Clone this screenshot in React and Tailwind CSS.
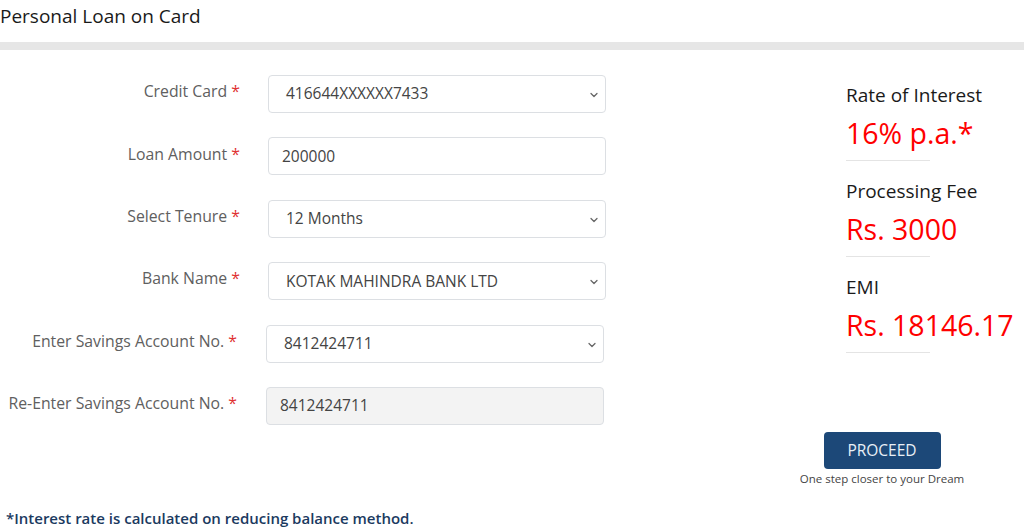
import { ChevronDown } from 'lucide-react';

const font = { fontFamily: '"Open Sans", "Noto Sans", Arial, sans-serif' };

function Label({ text }) {
  return (
    <label className="text-[15.8px] text-[#606060] whitespace-nowrap">
      {text} <span className="text-[#e03131]">*</span>
    </label>
  );
}

function SelectBox({ value }) {
  return (
    <div className="relative h-[38px] w-[338px] rounded-[4px] border border-[#dcdfe3] bg-white flex items-center pl-[17px] text-[15.5px] text-[#444]">
      <span>{value}</span>
      <ChevronDown className="absolute right-[5px] top-[13px] text-[#666]" size={12} strokeWidth={2.5} />
    </div>
  );
}

function InputBox({ value, disabled }) {
  return (
    <div
      className={`h-[38px] w-[338px] rounded-[4px] border border-[#dcdfe3] flex items-center pl-[13px] text-[15.5px] text-[#444] ${
        disabled ? 'bg-[#f3f3f3]' : 'bg-white'
      }`}
    >
      {value}
    </div>
  );
}

const rows = [
  { label: 'Credit Card', value: '416644XXXXXX7433', type: 'select', shift: false },
  { label: 'Loan Amount', value: '200000', type: 'input', shift: false },
  { label: 'Select Tenure', value: '12 Months', type: 'select', shift: false },
  { label: 'Bank Name', value: 'KOTAK MAHINDRA BANK LTD', type: 'select', shift: false },
  { label: 'Enter Savings Account No.', value: '8412424711', type: 'select', shift: true },
  { label: 'Re-Enter Savings Account No.', value: '8412424711', type: 'disabled', shift: true },
];

const stats = [
  { label: 'Rate of Interest', value: '16% p.a.*' },
  { label: 'Processing Fee', value: 'Rs. 3000' },
  { label: 'EMI', value: 'Rs. 18146.17' },
];

export default function App() {
  return (
    <div className="w-[1024px] h-[528px] bg-white overflow-hidden" style={font}>
      <div className="h-[42px] flex items-start pt-[1px]">
        <h1 className="text-[19px] leading-[30px] text-[#1a1a1a]">Personal Loan on Card</h1>
      </div>
      <div className="h-[8px] bg-[#e6e6e6]" />

      <div className="flex">
        <div className="w-[782px] pt-[25px] flex flex-col gap-[24.4px]">
          {rows.map((row) => (
            <div key={row.label} className="flex items-center h-[38px]">
              <div
                className={`flex justify-end pb-[4px] ${
                  row.shift ? 'w-[237px] mr-[29px]' : 'w-[240px] mr-[28px]'
                }`}
              >
                <Label text={row.label} />
              </div>
              {row.type === 'select' && <SelectBox value={row.value} />}
              {row.type === 'input' && <InputBox value={row.value} />}
              {row.type === 'disabled' && <InputBox value={row.value} disabled />}
            </div>
          ))}
        </div>

        <div className="w-[200px] pt-[31px] flex flex-col">
          <div className="pl-[64px] flex flex-col gap-[16px]">
            {stats.map((s) => (
              <div key={s.label}>
                <div className="text-[19px] leading-[28px] text-[#1a1a1a] whitespace-nowrap">{s.label}</div>
                <div className="mt-[4px] w-[84px] border-b border-[#e4e4e4] pb-[7px]">
                  <div className="text-[28.5px] leading-[40px] text-[#ff0000] whitespace-nowrap">{s.value}</div>
                </div>
              </div>
            ))}
          </div>
          <div className="mt-[79px] flex flex-col items-center">
            <button className="h-[37px] w-[117px] rounded-[4px] bg-[#1c4878] text-[15.5px] text-[#e9eff6]">
              PROCEED
            </button>
            <div className="mt-[1px] text-[11.5px] leading-[17px] text-[#444] whitespace-nowrap">
              One step closer to your Dream
            </div>
          </div>
        </div>
      </div>

      <div className="pl-[6px] mt-[21px] text-[15px] leading-[20px] font-semibold text-[#1b3a5f] whitespace-nowrap">
        *Interest rate is calculated on reducing balance method.
      </div>
    </div>
  );
}
